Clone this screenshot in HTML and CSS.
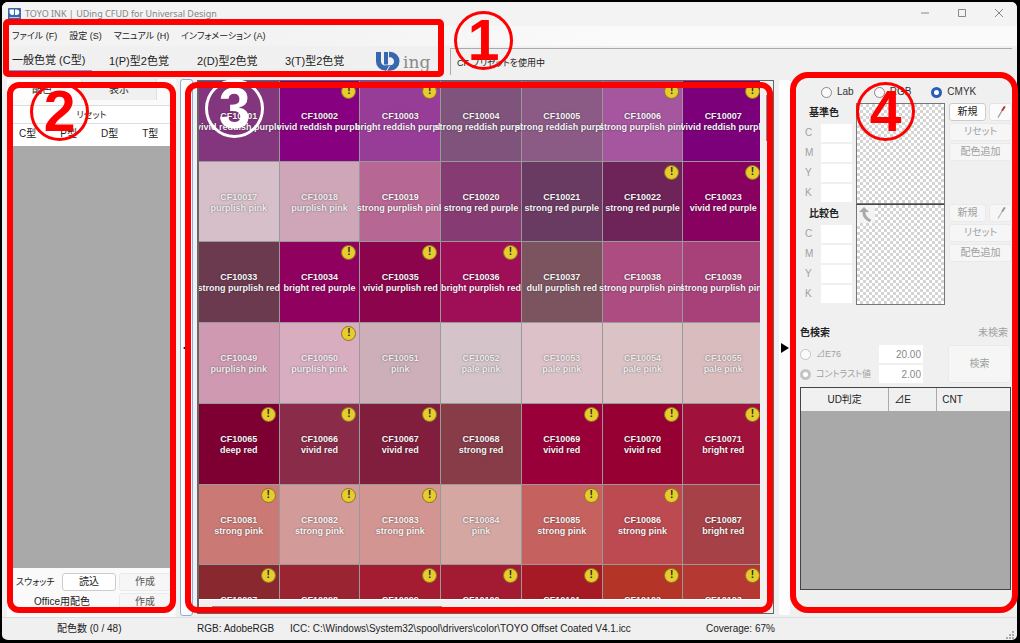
FILE: index.html
```html
<!DOCTYPE html>
<html lang="ja">
<head>
<meta charset="utf-8">
<title>TOYO INK | UDing CFUD for Universal Design</title>
<link rel="stylesheet" href="styles.css">
</head>
<body>
<div class="window">
  <header class="top">
    <div class="titlebar">
      <svg class="app-icon" viewBox="0 0 13 12" aria-hidden="true"><rect width="13" height="12" rx="1" fill="#3568ae"/><path d="M1.500 1.500v2a3 3 0 0 0 4.500 3V1.500z" fill="#fff"/><path d="M7 1.500h1.500a2.700 2.700 0 0 1 0 5.500H7z" fill="#fff"/><path d="M1.500 9.500h10" stroke="#b9cbe6" stroke-width="1"/></svg>
      <h1 class="title">TOYO INK | UDing CFUD for Universal Design</h1>
      <div class="window-buttons">
        <button class="winbtn" aria-label="最小化"><svg viewBox="0 0 10 10"><path d="M1 5h8"/></svg></button>
        <button class="winbtn" aria-label="最大化"><svg viewBox="0 0 10 10"><path d="M1.500 1.500h7v7h-7z"/></svg></button>
        <button class="winbtn" aria-label="閉じる"><svg viewBox="0 0 10 10"><path d="M1 1l8 8M9 1l-8 8"/></svg></button>
      </div>
    </div>
    <nav class="menubar">
      <button class="menu">ファイル (F)</button>
      <button class="menu">設定 (S)</button>
      <button class="menu">マニュアル (H)</button>
      <button class="menu">インフォメーション (A)</button>
    </nav>
    <div class="toolbar">
      <div class="vision-tabs">
        <button class="vision active">一般色覚 (C型)</button>
        <button class="vision">1(P)型2色覚</button>
        <button class="vision">2(D)型2色覚</button>
        <button class="vision">3(T)型2色覚</button>
      </div>
      <svg class="logo" viewBox="0 0 58 24" role="img" aria-label="UDing"><path d="M3.500 1v9.500a6.500 6.500 0 0 0 6.500 6.500" fill="none" stroke="#3568ae" stroke-width="5"/><path d="M11 1v12.500" stroke="#3568ae" stroke-width="4"/><path d="M14 3.500h1a6.750 6.750 0 0 1 0 13.500h-5" fill="none" stroke="#3568ae" stroke-width="5.500"/><path d="M11.500 20l3-5" stroke="#f0f0f0" stroke-width="1"/><text x="28" y="17" class="logo-text">ing</text></svg>
      <div class="notice">CF プリセットを使用中</div>
    </div>
    <div class="badge badge-one"><span>1</span></div>
    <div class="frame frame-top"></div>
  </header>

  <main class="workspace">
    <section class="left">
      <div class="left-tabs">
        <button class="ltab on">配色</button>
        <button class="ltab">表示</button>
      </div>
      <button class="reset-row">リセット</button>
      <div class="type-row"><span>C型</span><span>P型</span><span>D型</span><span>T型</span></div>
      <div class="left-list"></div>
      <div class="left-actions">
        <span>スウォッチ</span><button class="btn strong">読込</button><button class="btn" disabled>作成</button>
        <span class="office">Office用配色</span><button class="btn" disabled>作成</button>
      </div>
      <div class="badge badge-two"><span>2</span></div>
      <div class="frame"></div>
    </section>

    <button class="splitter focus" aria-label="左パネルを閉じる"><svg viewBox="0 0 8 10"><path d="M8 0v10L0 5z"/></svg></button>

    <section class="center">
      <div class="chart">
        <div class="viewport">
          <div class="cells">
            <div class="cell" style="background:#83357d"><b>CF10001</b><span>vivid reddish purple</span></div>
            <div class="cell warn" style="background:#87007f"><b>CF10002</b><span>vivid reddish purple</span></div>
            <div class="cell warn" style="background:#983d97"><b>CF10003</b><span>bright reddish purple</span></div>
            <div class="cell" style="background:#80537d"><b>CF10004</b><span>strong reddish purple</span></div>
            <div class="cell" style="background:#8b5b86"><b>CF10005</b><span>strong reddish purple</span></div>
            <div class="cell warn" style="background:#a5569e"><b>CF10006</b><span>strong purplish pink</span></div>
            <div class="cell warn" style="background:#7c007a"><b>CF10007</b><span>vivid reddish purple</span></div>

            <div class="cell pale" style="background:#d6bfc8"><b>CF10017</b><span>purplish pink</span></div>
            <div class="cell pale" style="background:#cfa6b8"><b>CF10018</b><span>purplish pink</span></div>
            <div class="cell" style="background:#b76794"><b>CF10019</b><span>strong purplish pink</span></div>
            <div class="cell" style="background:#863c72"><b>CF10020</b><span>strong red purple</span></div>
            <div class="cell" style="background:#6a3b62"><b>CF10021</b><span>strong red purple</span></div>
            <div class="cell warn" style="background:#6e2459"><b>CF10022</b><span>strong red purple</span></div>
            <div class="cell warn" style="background:#880060"><b>CF10023</b><span>vivid red purple</span></div>

            <div class="cell" style="background:#6c3a4f"><b>CF10033</b><span>strong purplish red</span></div>
            <div class="cell warn" style="background:#90005f"><b>CF10034</b><span>bright red purple</span></div>
            <div class="cell warn" style="background:#8b044c"><b>CF10035</b><span>vivid purplish red</span></div>
            <div class="cell warn" style="background:#9e0f58"><b>CF10036</b><span>bright purplish red</span></div>
            <div class="cell" style="background:#7c5460"><b>CF10037</b><span>dull purplish red</span></div>
            <div class="cell" style="background:#ac4c81"><b>CF10038</b><span>strong purplish pink</span></div>
            <div class="cell" style="background:#a8407a"><b>CF10039</b><span>strong purplish pink</span></div>

            <div class="cell pale" style="background:#cf9ab1"><b>CF10049</b><span>purplish pink</span></div>
            <div class="cell pale warn" style="background:#d8adbf"><b>CF10050</b><span>purplish pink</span></div>
            <div class="cell pale" style="background:#ccafb8"><b>CF10051</b><span>pink</span></div>
            <div class="cell pale" style="background:#d4c4c9"><b>CF10052</b><span>pale pink</span></div>
            <div class="cell pale" style="background:#dcc2c8"><b>CF10053</b><span>pale pink</span></div>
            <div class="cell pale" style="background:#dbc2c5"><b>CF10054</b><span>pale pink</span></div>
            <div class="cell pale" style="background:#d9bcbe"><b>CF10055</b><span>pale pink</span></div>

            <div class="cell warn" style="background:#7e0033"><b>CF10065</b><span>deep red</span></div>
            <div class="cell warn" style="background:#8a2b49"><b>CF10066</b><span>vivid red</span></div>
            <div class="cell warn" style="background:#811e3e"><b>CF10067</b><span>vivid red</span></div>
            <div class="cell" style="background:#873c48"><b>CF10068</b><span>strong red</span></div>
            <div class="cell warn" style="background:#990039"><b>CF10069</b><span>vivid red</span></div>
            <div class="cell warn" style="background:#970032"><b>CF10070</b><span>vivid red</span></div>
            <div class="cell warn" style="background:#a0113b"><b>CF10071</b><span>bright red</span></div>

            <div class="cell warn" style="background:#ca7974"><b>CF10081</b><span>strong pink</span></div>
            <div class="cell warn" style="background:#d29b99"><b>CF10082</b><span>strong pink</span></div>
            <div class="cell warn" style="background:#d39591"><b>CF10083</b><span>strong pink</span></div>
            <div class="cell pale" style="background:#d5a7a2"><b>CF10084</b><span>pink</span></div>
            <div class="cell warn" style="background:#c5625f"><b>CF10085</b><span>strong pink</span></div>
            <div class="cell warn" style="background:#be4a51"><b>CF10086</b><span>strong pink</span></div>
            <div class="cell" style="background:#a64247"><b>CF10087</b><span>bright red</span></div>

            <div class="cell warn" style="background:#8a2830"><b>CF10097</b></div>
            <div class="cell" style="background:#9b2433"><b>CF10098</b></div>
            <div class="cell warn" style="background:#a31c32"><b>CF10099</b></div>
            <div class="cell warn" style="background:#a31b33"><b>CF10100</b></div>
            <div class="cell warn" style="background:#a51a25"><b>CF10101</b></div>
            <div class="cell warn" style="background:#b43428"><b>CF10102</b></div>
            <div class="cell warn" style="background:#b53832"><b>CF10103</b></div>
          </div>
        </div>
        <div class="vscroll"><i></i></div>
        <div class="hscroll"><i></i></div>
      </div>
      <div class="badge badge-three"><span>3</span></div>
      <div class="frame frame-center"></div>
    </section>

    <button class="splitter last" aria-label="右パネルを閉じる"><svg viewBox="0 0 8 10"><path d="M0 0v10l8-5z"/></svg></button>

    <section class="right">
      <div class="modes">
        <label><input type="radio" name="mode">Lab</label>
        <label><input type="radio" name="mode">RGB</label>
        <label><input type="radio" name="mode" checked>CMYK</label>
      </div>
      <div class="colors">
        <div class="channels">
          <h2>基準色</h2>
          <label for="c1">C</label><input id="c1" disabled>
          <label for="m1">M</label><input id="m1" disabled>
          <label for="y1">Y</label><input id="y1" disabled>
          <label for="k1">K</label><input id="k1" disabled>
        </div>
        <div class="swatch"></div>
        <div class="ops">
          <button class="btn strong">新規</button>
          <button class="btn pick" aria-label="スポイト"><svg viewBox="0 0 12 14"><path d="M3 12.500L7.500 5" stroke="#999" stroke-width="1.300"/><path d="M7.500 5l2-3" stroke="#b33" stroke-width="2" stroke-linecap="round"/></svg></button>
          <button class="btn wide" disabled>リセット</button>
          <button class="btn wide" disabled>配色追加</button>
        </div>
        <div class="channels">
          <h2>比較色</h2>
          <label for="c2">C</label><input id="c2" disabled>
          <label for="m2">M</label><input id="m2" disabled>
          <label for="y2">Y</label><input id="y2" disabled>
          <label for="k2">K</label><input id="k2" disabled>
        </div>
        <div class="swatch lower"><button class="copy" aria-label="基準色へ移動"><svg viewBox="0 0 18 18"><path d="M7 5v3c0 4 2.500 6 6.500 8" fill="none" stroke="#aaa" stroke-width="3"/><path d="M2 7l5-5 5 5z" fill="#aaa"/></svg></button></div>
        <div class="ops">
          <button class="btn" disabled>新規</button>
          <button class="btn pick" disabled aria-label="スポイト"><svg viewBox="0 0 12 14"><path d="M3 12.500L7.500 5" stroke="#bbb" stroke-width="1.300"/><path d="M7.500 5l2-3" stroke="#999" stroke-width="2" stroke-linecap="round"/></svg></button>
          <button class="btn wide" disabled>リセット</button>
          <button class="btn wide" disabled>配色追加</button>
        </div>
      </div>
      <div class="search">
        <h2>色検索</h2><span class="state">未検索</span>
        <label><input type="radio" name="metric" disabled>⊿E76</label>
        <input class="num" value="20.00" aria-label="⊿E76" disabled>
        <button class="btn go" disabled>検索</button>
        <label><input type="radio" name="metric" checked disabled>コントラスト値</label>
        <input class="num" value="2.00" aria-label="コントラスト値" disabled>
      </div>
      <div class="results">
        <table>
          <thead><tr><th class="ud">UD判定</th><th class="de">⊿E</th><th>CNT</th></tr></thead>
        </table>
      </div>
      <div class="badge badge-four"><span>4</span></div>
      <div class="frame frame-right"></div>
    </section>
  </main>

  <footer class="status">
    <span class="count">配色数 (0 / 48)</span>
    <span class="profile">RGB: AdobeRGB</span>
    <span class="icc">ICC: C:\Windows\System32\spool\drivers\color\TOYO Offset Coated V4.1.icc</span>
    <span class="coverage">Coverage: 67%</span>
    <svg class="grip" viewBox="0 0 10 10" aria-hidden="true"><path d="M7 1h2v2h-2zM7 4h2v2h-2zM7 7h2v2h-2zM4 4h2v2h-2zM4 7h2v2h-2zM1 7h2v2h-2z" fill="#aaa"/></svg>
  </footer>
</div>
</body>
</html>
```
FILE: styles.css
```css
* { box-sizing: border-box; }

body {
  margin: 0;
  background: #000;
  color: #222;
  font: 10px/12px "Liberation Sans", "Noto Sans CJK JP", sans-serif;
  font-feature-settings: "palt";
}

button, input {
  margin: 0;
  padding: 0;
  border: 0;
  background: none;
  color: inherit;
  font: inherit;
  font-feature-settings: inherit;
}

h1, h2 { margin: 0; font-size: 10px; }

.window {
  display: flex;
  flex-direction: column;
  height: 100vh;
  min-height: 600px;
  border: solid #000;
  border-width: 2px 3px 3px 2px;
  border-radius: 8px;
  background: #f0f0f0;
}

/* Annotation overlays */
.frame {
  position: absolute;
  inset: 3px 0 4px;
  border: 6px solid #f00;
  border-radius: 12px;
  pointer-events: none;
}
.frame-top { inset: 17px auto 2px 1px; width: 441px; border-radius: 5px; }
.frame-center { left: -12px; right: 1px; }
.frame-right { inset: -7px -1px 4px; border-radius: 18px; }

.badge {
  position: absolute;
  display: flex;
  align-items: center;
  justify-content: center;
  width: 59px;
  height: 59px;
  border: 3px solid #f00;
  border-radius: 50%;
  color: #f00;
  font: bold 57px/57px "Liberation Sans", sans-serif;
  font-feature-settings: normal;
}
.badge-one { left: 452px; top: 9px; }
.badge-two { left: 23px; top: 3px; }
.badge-three { left: 8px; top: 0; border-color: #fff; color: #fff; }
.badge-four { left: 65px; top: 3px; }

/* Header */
.top { position: relative; z-index: 1; }
.titlebar {
  display: flex;
  align-items: center;
  height: 24px;
  padding-left: 6px;
  border-radius: 6px 6px 0 0;
  background: #f3f3f3;
}
.app-icon { width: 13px; height: 12px; }
.title {
  flex: 1;
  margin-left: 4px;
  color: #858585;
  font: 9px/12px "Noto Sans", sans-serif;
}
.window-buttons { display: flex; }
.winbtn { width: 37px; height: 24px; }
.winbtn svg { width: 10px; height: 10px; fill: none; stroke: #888; }

.menubar {
  display: flex;
  gap: 12px;
  height: 20px;
  padding-left: 10px;
  font-size: 9px;
  background: linear-gradient(90deg, #f3f3f3 28%, #fafafa 60%);
}

.toolbar { display: flex; height: 33px; }
.vision-tabs { display: flex; align-items: flex-start; width: 373px; padding-left: 6px; }
.vision {
  width: 88px;
  height: 26px;
  padding: 4px 0 0 4px;
  text-align: left;
  font-size: 11px;
  white-space: nowrap;
}
.vision + .vision { padding-left: 17px; }
.vision.active { width: 84px; border-bottom: 2px solid #6d9eeb; }
.logo { width: 58px; height: 24px; margin-top: 5px; }
.logo-text { fill: #8a8a8a; font: 17px "DejaVu Serif", serif; }
.notice {
  flex: 1;
  height: 27px;
  margin: 2px 5px 0 17px;
  padding: 8px 0 0 6px;
  border: solid #aaa;
  border-width: 1px 0 0 1px;
  font-size: 9px;
}

/* Workspace */
.workspace { display: flex; flex: 1; min-height: 0; }
.workspace > section { position: relative; }

.left {
  display: flex;
  flex-direction: column;
  width: 169px;
  margin-left: 5px;
  padding: 0 5px 5px;
  background: #fafafa;
}
.left-tabs { display: flex; height: 21px; }
.ltab { width: 75px; padding-top: 1px; background: #f0f0f0; border-right: 1px solid #e0e0e0; }
.ltab.on { width: 70px; padding-right: 9px; background: #fdfdfd; }
.reset-row { height: 19px; margin-top: 5px; border: solid #ddd; border-width: 1px 0; background: #fff; font-size: 9px; }
.type-row { display: flex; gap: 24px; height: 22px; padding: 4px 0 0 7px; background: #fff; }
.left-list { flex: 1; background: #a9a9a9; }
.left-actions {
  display: grid;
  grid-template-columns: 43px 54px 1fr;
  grid-template-rows: 20px 20px;
  column-gap: 3px;
  align-items: center;
  padding: 4px 0 0 4px;
  background: #fafafa;
}
.left-actions > :first-child { font-size: 9px; }
.left-actions .office { grid-column: span 2; padding-right: 8px; text-align: center; }

.btn {
  height: 18px;
  border: 1px solid #e4e4e4;
  border-radius: 3px;
  background: #fbfbfb;
  white-space: nowrap;
}
.btn.strong { border-color: #ccc; background: #fff; }
.btn:disabled { color: #a0a0a0; background: #f6f6f6; border-color: #eaeaea; }
.left-actions .btn:disabled { color: #555; }

.splitter {
  flex: none;
  width: 13px;
  margin: 0 4px 1px;
  border: 1px solid #eee;
  border-radius: 3px;
  background: #fdfdfd;
}
.splitter.last { margin-right: 0; }
.splitter svg { display: block; width: 8px; height: 10px; margin-left: 2px; }
.splitter.focus { border-color: #86aede; }

/* Colour chart */
.center { flex: 1; min-width: 0; padding: 1px 0 3px; }
.chart {
  display: grid;
  grid-template-columns: 1fr 13px;
  grid-template-rows: 1fr 13px;
  height: 100%;
  border: 1px solid #666;
  border-left-width: 2px;
  background: #f0f0f0;
}
.viewport { overflow: hidden; min-width: 0; min-height: 0; border-bottom: 1px solid #fff; }
.cells {
  display: grid;
  grid-template-columns: repeat(7, minmax(0, 1fr));
  grid-template-rows: repeat(7, minmax(0, 1fr));
  gap: 1px;
  width: calc(100% + 3px);
  height: calc(100% + 46px);
  background: #999;
}
.cell {
  display: flex;
  flex-direction: column;
  align-items: center;
  position: relative;
  padding-top: 30px;
  color: #f4f4f4;
  font: bold 9px/11px "Liberation Sans", sans-serif;
  white-space: nowrap;
  text-shadow: 0 0 2px rgba(0, 0, 0, .5);
}
.pale { color: #ececec; }
.warn::after {
  content: "!";
  position: absolute;
  top: 3px;
  right: 3px;
  width: 13px;
  height: 13px;
  border: 1px solid #8a7420;
  border-radius: 50%;
  background: #e6cc2c;
  color: #222;
  font: bold 10px/11px "Liberation Sans", sans-serif;
  text-align: center;
  text-shadow: none;
}
.vscroll { display: flex; justify-content: center; padding-top: 14px; }
.vscroll i { width: 2px; height: 46px; background: #8a8a8a; }
.hscroll { display: flex; align-items: center; padding-left: 13px; }
.hscroll i { width: 42%; height: 2px; background: #8a8a8a; }

/* Right panel */
.right { display: flex; flex-direction: column; width: 226px; padding: 7px 6px 27px 9px; }
.right label { color: #a0a0a0; }
.right input[type=radio] {
  appearance: none;
  width: 11px;
  height: 11px;
  margin-right: 5px;
  border: 1px solid #888;
  border-radius: 50%;
  background: #fafafa;
}
.right input[type=radio]:checked { border: 3px solid #2a5db8; background: #fff; }
.right input[type=radio]:disabled { border-color: #c4c4c4; }
.modes { display: flex; gap: 20px; height: 17px; padding-left: 21px; }
.modes label { display: flex; align-items: center; height: 12px; color: #333; }
.colors {
  display: grid;
  grid-template-columns: 47px 89px 63px;
  column-gap: 4px;
  padding-left: 5px;
}
.channels {
  display: grid;
  grid-template-columns: 16px 31px;
  grid-auto-rows: 20px;
  align-items: center;
}
.channels h2 { grid-column: span 2; padding-left: 4px; }
.channels input { width: 31px; height: 18px; background: #fff; }
.swatch {
  height: 101px;
  border: 1px solid #777;
  background: repeating-conic-gradient(#d4d4d4 0 25%, #fff 0 50%) 0 0 / 6px 6px;
}
.swatch.lower { border-top-color: #444; }
.copy { width: 18px; height: 18px; background: #f3f3f3; }
.copy svg { width: 18px; height: 18px; display: block; }
.ops {
  display: grid;
  grid-template-columns: 37px 23px;
  gap: 2px 3px;
  align-content: start;
}
.wide { grid-column: span 2; }
.pick svg { width: 12px; height: 14px; display: block; margin: auto; }

.search {
  display: grid;
  grid-template-columns: 79px 44px 1fr;
  row-gap: 2px;
  align-items: center;
  margin-top: 22px;
}
.search h2 { grid-column: span 2; margin-bottom: 4px; }
.search .state { margin-bottom: 4px; color: #a0a0a0; text-align: right; padding-right: 3px; }
.search label { display: flex; align-items: center; white-space: nowrap; font-size: 9px; }
.num { width: 44px; height: 18px; padding-right: 2px; background: #fff; color: #888; text-align: right; }
.go { grid-row: 2 / span 2; grid-column: 3; justify-self: end; width: 63px; height: 38px; }

.results { flex: 1; margin-top: 4px; border: 1px solid #444; background: #a9a9a9; }
.results table { width: 100%; border-collapse: collapse; background: #f0f0f0; table-layout: fixed; }
.results th { height: 23px; padding: 0 0 0 5px; font-weight: normal; text-align: left; }
.results th + th { border-left: 1px solid #aaa; }
.results .ud { width: 42%; padding: 0; text-align: center; }
.results .de { width: 23%; }

/* Status bar */
.status {
  display: flex;
  align-items: center;
  height: 23px;
  padding-left: 55px;
  border-top: 1px solid #ddd;
}
.count { width: 140px; }
.profile { width: 93px; }
.icc { flex: 1; }
.coverage { width: 299px; }
.grip { width: 10px; height: 10px; align-self: flex-end; margin-right: 2px; }
```
